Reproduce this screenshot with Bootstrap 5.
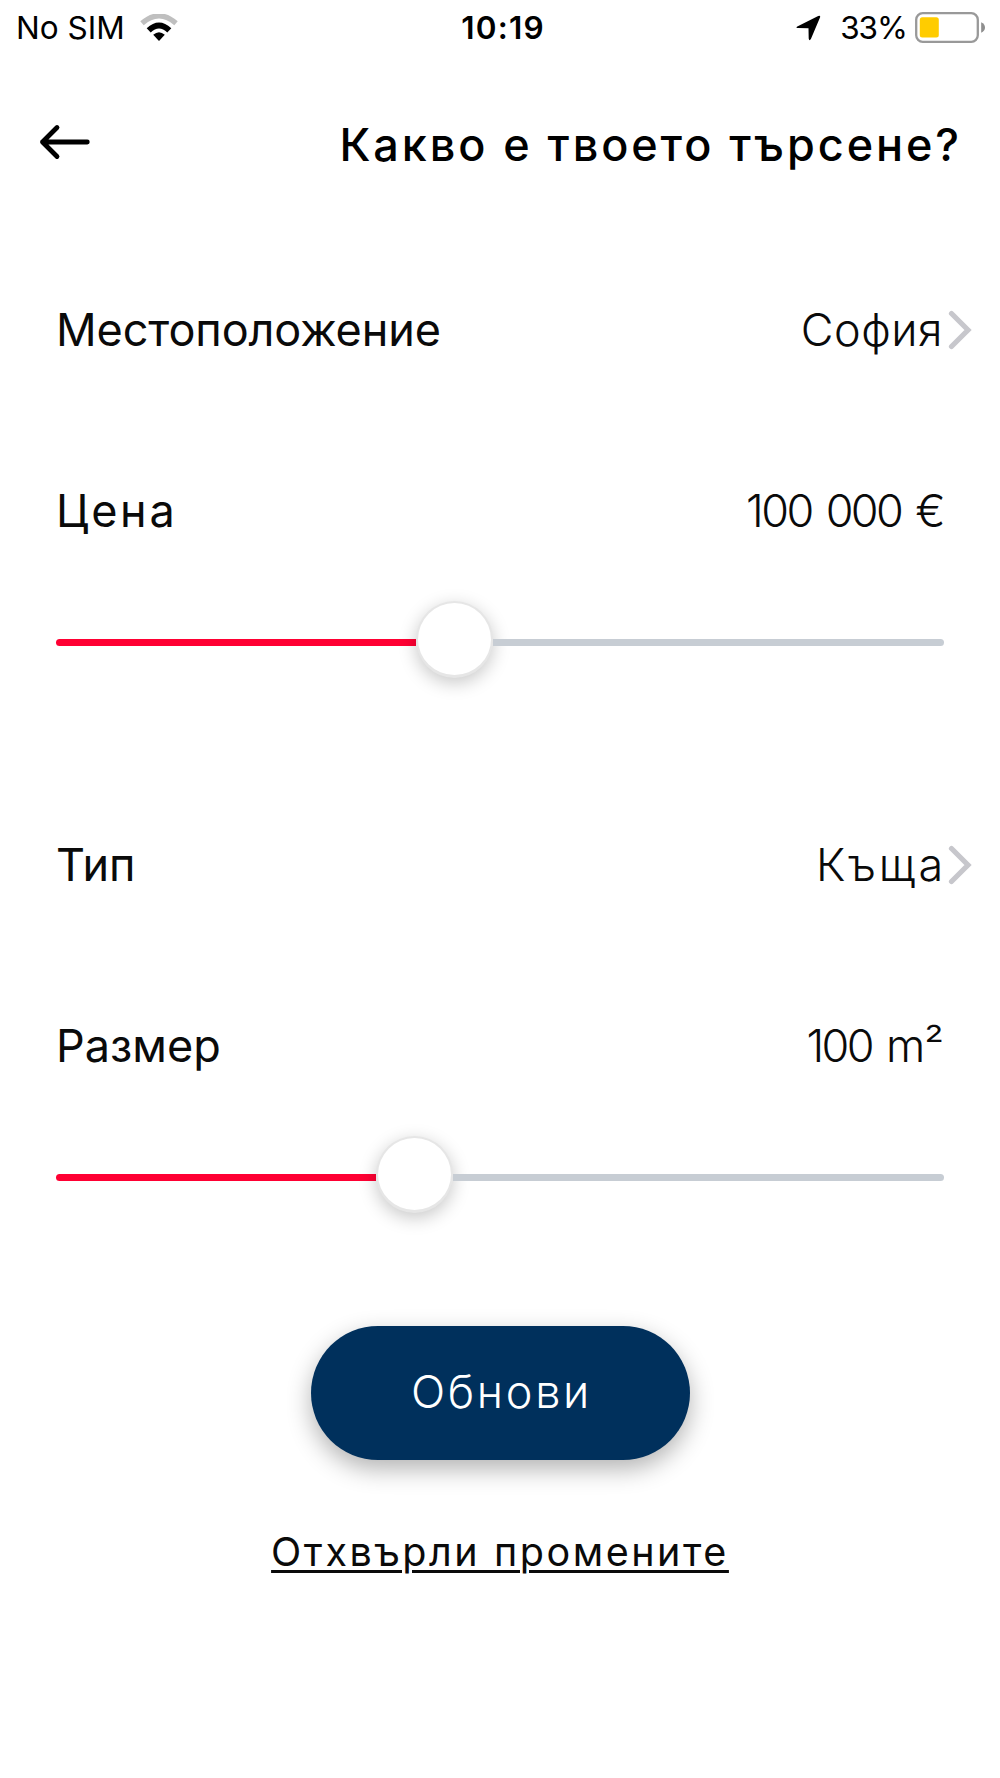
<!DOCTYPE html>
<html lang="bg">
<head>
<meta charset="utf-8">
<meta name="viewport" content="width=device-width, initial-scale=1">
<title>Какво е твоето търсене?</title>
<link rel="stylesheet" href="https://cdn.jsdelivr.net/npm/bootstrap@5.3.0/dist/css/bootstrap.min.css">
<style>
  body { font-family: Inter, "Noto Sans", sans-serif; color: #0a0a0a; background: #fff; }
  svg { display: block; flex: none; }
  .phone { width: 1000px; height: 1778px; overflow: hidden; }
  .status { height: 55px; font-size: 31.5px; line-height: 55px; color: #000; padding: 0 14px 0 16px; }
  .status > div { flex: 1 1 0; }
  .clock { font-weight: 600; letter-spacing: 1.2px; padding-left: 4px; }
  .wifi { margin-left: 15px; }
  .percent { margin: 0 8px 0 19px; letter-spacing: -1px; }
  .topbar { height: 90px; margin-top: 43px; padding: 0 38px 0 38px; }
  .topbar h1 { font-size: 45px; line-height: 90px; font-weight: 500; letter-spacing: 2.92px; color: #000; padding-top: 3px; }
  .field { height: 90px; line-height: 90px; font-size: 45px; padding: 0 28px 0 56px; }
  .field .value { font-weight: 300; margin-right: 5px; }
  .field.plain .value { margin-right: 29px; }
  .gap-a { margin-top: 97px; }
  .gap-b { margin-top: 91px; }
  .gap-c { margin-top: 140px; }
  .ls-0 { letter-spacing: -.1px; }
  .ls-04 { letter-spacing: .5px; }
  .ls-wide { letter-spacing: 2.7px; }
  .field .value.ls-wide { margin-right: 2px; }
  .ls-tight { letter-spacing: -2.6px; word-spacing: 4px; }
  .ls-tight .unit { letter-spacing: -1px; }
  .slider { height: 76px; margin: 48px 56px 0; }
  .rail { height: 7px; background: #c7cdd4; border-radius: 4px; flex: none; }
  .rail-on { background: #ff0033; border-radius: 4px 0 0 4px; }
  .rail-off { flex: 1 1 auto; border-radius: 0 4px 4px 0; }
  .knob { width: 77px; height: 77px; flex: none; background: #fff; border-radius: 50%; border: 2px solid #e6e6e6; border-bottom-width: 3px; margin-top: -6px; box-shadow: 0 5px 18px rgba(0,0,0,.22); background-clip: padding-box; }
  .btn-update { width: 379px; height: 134px; margin-top: 111px; font-size: 45px; letter-spacing: 2.7px; font-weight: 300; background: #00305c; color: #fff; border: 0; box-shadow: 0 9px 24px rgba(0,0,0,.3); padding: 0 0 3px 3px; }
  .btn-update:hover { background: #00305c; color: #fff; }
  .discard { margin-top: 66px; font-size: 39.5px; line-height: 52px; letter-spacing: 2.55px; color: #0a0a0a; text-decoration-thickness: 2.6px; text-underline-offset: 4px; }
</style>
<script src="https://cdn.jsdelivr.net/npm/bootstrap@5.3.0/dist/js/bootstrap.bundle.min.js"></script>
</head>
<body>
<main class="phone d-flex flex-column">
  <div class="status d-flex align-items-center">
    <div class="d-flex align-items-center">
      <span>No SIM</span>
      <svg class="wifi" width="38" height="28" viewBox="0 0 38 28">
        <path d="M2 9.3 Q19-5.5 36 9.3" fill="none" stroke="#bfbfbf" stroke-width="5.2"/>
        <path d="M8.7 16.4 Q19 6.6 29.3 16.4" fill="none" stroke="#000" stroke-width="5.8"/>
        <path d="M13.2 20.8 Q19 15.6 24.8 20.8 L19 27Z"/>
      </svg>
    </div>
    <span class="clock">10:19</span>
    <div class="d-flex align-items-center justify-content-end">
      <svg width="25" height="26" viewBox="0 0 25 26"><path d="M1.3 11.6 L22.2 1 Q24.8 0 24 2.6 L14.9 24 Q13.3 26.5 12.7 23.5 L12.5 13.3 L2 13.1 Q-.6 12.9 1.3 11.6Z"/></svg>
      <span class="percent">33%</span>
      <svg width="71" height="31" viewBox="0 0 71 31">
        <rect x="1.2" y="1.2" width="61.6" height="28.6" rx="6.5" fill="#fff" stroke="#999" stroke-width="2.3"/>
        <rect x="4.8" y="5.2" width="19" height="20.4" rx="2.5" fill="#fc0"/>
        <path d="M66.2 10.2 Q70 12 70 15.5 T66.2 20.8Z" fill="#8e8e8e"/>
      </svg>
    </div>
  </div>

  <header class="topbar d-flex align-items-center justify-content-between">
    <svg width="54" height="40" viewBox="0 0 54 40"><path d="M19 4.5 L4.5 19 L19 33.5 M4.5 19 H49.3" fill="none" stroke="#000" stroke-width="4.8" stroke-linecap="round" stroke-linejoin="round"/></svg>
    <h1 class="m-0">Какво е твоето търсене?</h1>
  </header>

  <div class="field gap-a d-flex align-items-center justify-content-between">
    <span class="ls-0">Местоположение</span>
    <div class="d-flex align-items-center"><span class="value ls-04">София</span>
      <svg width="24" height="40" viewBox="0 0 24 40"><path d="M3.5 3.5 L20 20 L3.5 36.5" fill="none" stroke="#c7c7cc" stroke-width="5.2" stroke-linecap="round"/></svg></div>
  </div>

  <div class="field plain gap-b d-flex align-items-center justify-content-between">
    <span class="ls-wide">Цена</span>
    <span class="value ls-tight">100 000 €</span>
  </div>
  <div class="slider d-flex align-items-center">
    <div class="rail rail-on" style="width:360px"></div>
    <div class="knob"></div>
    <div class="rail rail-off"></div>
  </div>

  <div class="field gap-c d-flex align-items-center justify-content-between">
    <span>Тип</span>
    <div class="d-flex align-items-center"><span class="value ls-wide">Къща</span>
      <svg width="24" height="40" viewBox="0 0 24 40"><path d="M3.5 3.5 L20 20 L3.5 36.5" fill="none" stroke="#c7c7cc" stroke-width="5.2" stroke-linecap="round"/></svg></div>
  </div>

  <div class="field plain gap-b d-flex align-items-center justify-content-between">
    <span>Размер</span>
    <span class="value ls-tight">100 <span class="unit">m²</span></span>
  </div>
  <div class="slider d-flex align-items-center">
    <div class="rail rail-on" style="width:320px"></div>
    <div class="knob"></div>
    <div class="rail rail-off"></div>
  </div>

  <button type="button" class="btn btn-update rounded-pill align-self-center">Обнови</button>
  <a href="#" class="discard align-self-center">Отхвърли промените</a>
</main>
</body>
</html>
